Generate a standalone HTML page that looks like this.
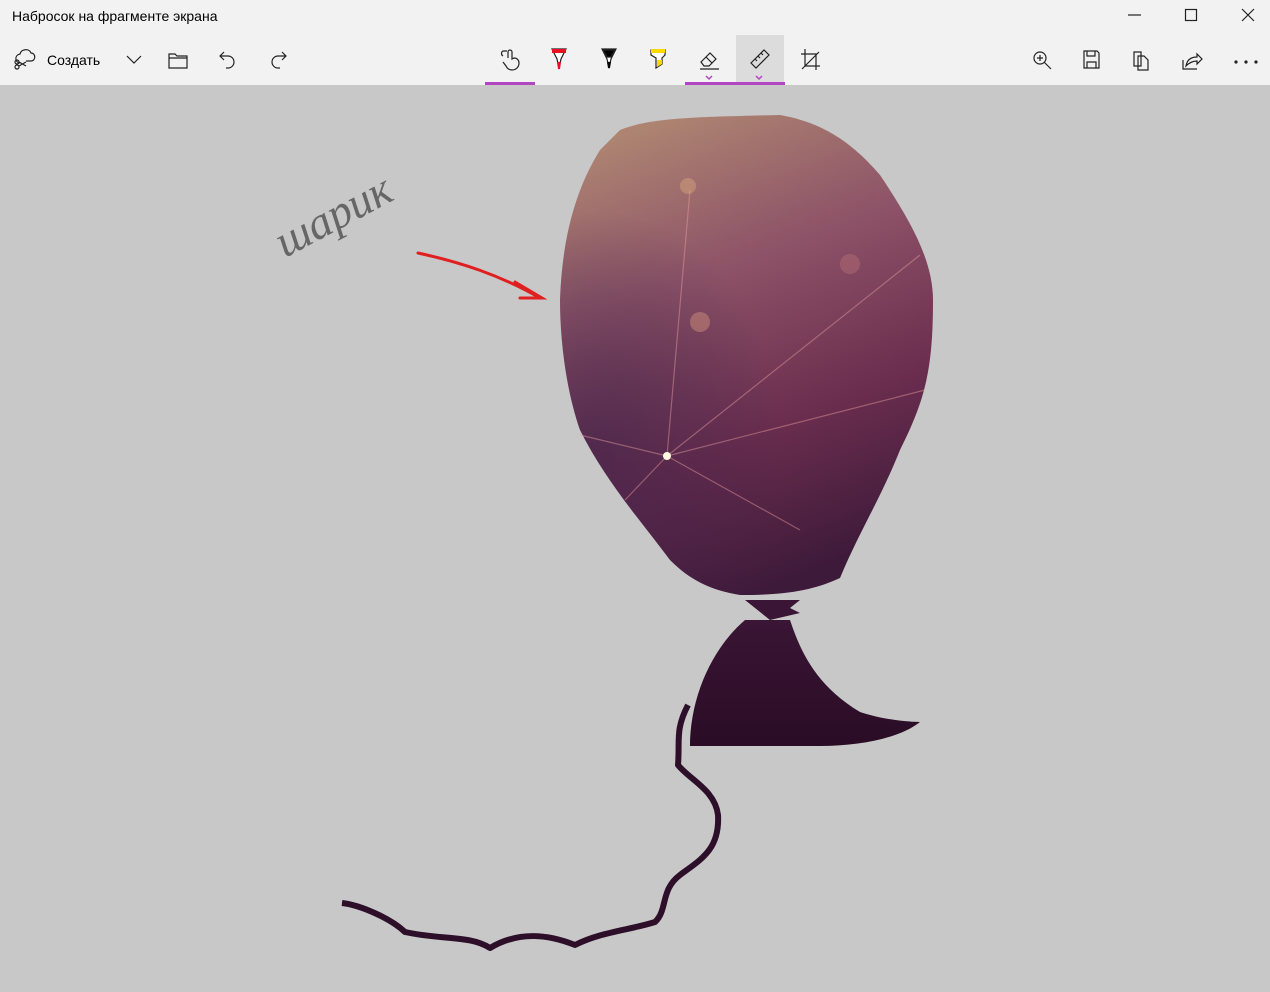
<!DOCTYPE html>
<html><head><meta charset="utf-8"><style>
body{margin:0;width:1270px;height:992px;overflow:hidden;background:#c8c8c8;font-family:"Liberation Sans","Noto Sans CJK SC",sans-serif}
#top{position:absolute;left:0;top:0;width:1270px;height:85px;background:#f2f2f2}
.t{position:absolute;font-size:14px;color:#000}
svg.i{position:absolute}
.ul{position:absolute;top:82px;height:3px;background:#b146c2}
</style></head><body>
<div id="top">
<div style="position:absolute;left:736px;top:35px;width:48px;height:47px;background:#dcdcdc"></div>
<div class="t" style="left:12px;top:8px">Набросок на фрагменте экрана</div>
<div class="t" style="left:47px;top:52px">Создать</div>
<svg class="i" style="left:0;top:0" width="1270" height="85" fill="none" stroke="#222" stroke-width="1.2">
<path d="M1128 15h13"/><rect x="1185.5" y="9.5" width="11" height="11"/><path d="M1242 9l12 12M1254 9l-12 12"/>
<path d="M20 63c-5 0-6-8 0-9 1-5 9-6 11-1 5 0 5 8 0 8h-5"/><circle cx="17" cy="67" r="2"/><circle cx="17" cy="62" r="2"/><path d="M19 66l7-4M19 62l7 4"/>
<path d="M127 56l7 7 7-7"/>
<path d="M169 54h6l2 2h10v12h-18z M169 58h18"/>
<path d="M224 52l-4 4 4 4M220 56h8a6 6 0 0 1 0 12h-2"/>
<path d="M282 52l4 4-4 4M286 56h-8a6 6 0 0 0 0 12h2"/>
<path d="M508 58v-6a2 2 0 0 1 4 0v7l2-1c3 0 5 2 5 5 0 4-3 7-7 7-3 0-5-2-6-4l-3-4M503 56c-2-1-2-4 0-5h4"/>
<path d="M552 49h14l-5 10-2 9-2-9z" fill="#fff"/><rect x="552" y="49" width="14" height="4" fill="#e81123" stroke="none"/><path d="M558 62l1 7 1-7" stroke="#e81123" stroke-width="2"/>
<path d="M602 49h14l-5 10-2 9-2-9z" fill="#fff"/><path d="M603 50h12l-4 7h-4z" fill="#000"/><path d="M608 62l1 6 1-6" stroke="#000" stroke-width="2"/>
<path d="M651 50h14v5l-3 3v6l-6 4v-10l-5-3z" fill="#fff"/><rect x="651" y="49" width="14" height="4" fill="#ffd800" stroke="none"/><path d="M657 60h5v4l-5 3z" fill="#ffd800" stroke="none"/>
<path d="M701 62l9-9 6 6-7 7h-5zM706 57l6 6M700 69h19"/>
<path d="M706 76l3 3 3-3M756 76l3 3 3-3" stroke="#b146c2" stroke-width="1.5"/>
<path d="M751 63l13-13 5 5-13 13zM755 59l2 2M758 56l2 2M761 53l2 2"/>
<path d="M805 49v17h15M801 54h15v16M802 69l17-17"/>
<circle cx="1040" cy="58" r="6"/><path d="M1044 62l7 7M1037 58h6M1040 55v6"/>
<path d="M1084 51h13l2 2v15h-15zM1087 51v5h8v-5M1087 68v-6h9v6"/>
<path d="M1134 52h7v14h-7zM1138 56h6l4 4v10h-10z"/>
<path d="M1183 60v9h14M1186 66c1-6 5-9 11-9v-3l5 5-5 5v-3c-4 0-8 2-11 5z"/>
<circle cx="1236" cy="62" r="1" fill="#222"/><circle cx="1246" cy="62" r="1" fill="#222"/><circle cx="1256" cy="62" r="1" fill="#222"/>
</svg>
<div class="ul" style="left:485px;width:50px"></div>
<div class="ul" style="left:685px;width:100px"></div>
</div>
<svg style="position:absolute;left:0;top:85px" width="1270" height="907" viewBox="0 85 1270 907">
<defs>
<linearGradient id="g" x1="0.2" y1="0" x2="0.5" y2="1"><stop offset="0" stop-color="#b08872"/><stop offset="0.35" stop-color="#8e5468"/><stop offset="0.7" stop-color="#6a2d4e"/><stop offset="1" stop-color="#3e1a3a"/></linearGradient>
<radialGradient id="r" cx="0.1" cy="0.7" r="0.5"><stop offset="0" stop-color="#3a2048" stop-opacity=".6"/><stop offset="1" stop-color="#3a2048" stop-opacity="0"/></radialGradient>
<linearGradient id="d" x1="0" y1="0" x2="0" y2="1"><stop offset="0" stop-color="#3a1535"/><stop offset="1" stop-color="#2a0c25"/></linearGradient>
</defs>
<path id="b" d="M620 130C650 118 690 117 780 115C820 122 850 140 880 175C910 220 933 260 933 300C933 370 925 400 900 450C880 500 860 530 840 578C810 592 780 595 740 595C710 590 690 580 670 560C640 520 605 480 580 430C566 390 560 340 560 300C562 240 575 190 600 150Z" fill="url(#g)"/>
<path d="M620 130C650 118 690 117 780 115C820 122 850 140 880 175C910 220 933 260 933 300C933 370 925 400 900 450C880 500 860 530 840 578C810 592 780 595 740 595C710 590 690 580 670 560C640 520 605 480 580 430C566 390 560 340 560 300C562 240 575 190 600 150Z" fill="url(#r)"/>
<g stroke="#e8a0a0" stroke-opacity="0.45" stroke-width="1.2">
<path d="M667 456L920 255M667 456L925 390M667 456L580 435M667 456L625 500M667 456L800 530M667 456L690 190"/></g>
<circle cx="667" cy="456" r="4" fill="#fff8e0"/>
<circle cx="700" cy="322" r="10" fill="#e0a080" opacity=".4"/><circle cx="688" cy="186" r="8" fill="#e0b080" opacity=".4"/><circle cx="850" cy="264" r="10" fill="#d08080" opacity=".3"/>
<path d="M745 600h55l-10 8 10 5-30 7zM768 612h30" fill="#3a1535"/>
<path d="M745 620L790 620C800 650 815 685 860 712C890 722 920 722 920 722C900 738 860 746 820 746H690C690 700 710 650 745 620Z" fill="url(#d)"/>
<path d="M688 705C675 730 680 740 678 765C690 780 715 790 718 815C720 850 700 860 680 875C660 890 668 910 655 922C630 930 600 932 575 945C550 935 520 930 490 948C470 935 440 940 405 932C390 918 360 905 342 903" stroke="#2e0f2a" stroke-width="6" fill="none" stroke-linejoin="round"/>
<path d="M418 253C460 262 500 275 540 298" stroke="#e02020" stroke-width="3" fill="none" stroke-linecap="round"/>
<path d="M515 282L542 298L520 298" stroke="#e02020" stroke-width="3" fill="none" stroke-linecap="round"/>
<text x="285" y="258" transform="rotate(-28 285 258)" font-family="Liberation Serif,serif" font-style="italic" font-size="46" fill="#666">шарик</text>
</svg>
</body></html>
